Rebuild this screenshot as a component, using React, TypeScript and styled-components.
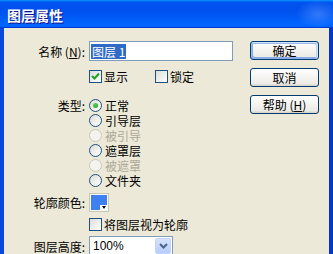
import React from "react"
import styled, { createGlobalStyle, css } from "styled-components"

const GlobalStyle = createGlobalStyle`
  html, body {
    margin: 0;
    padding: 0;
    background: #ece9d8;
  }
  body {
    font-family: "Noto Sans CJK SC", "Liberation Sans", sans-serif;
    font-size: 12px;
    color: #000;
  }
`

const Window = styled.div`
  width: 333px;
  height: 254px;
  overflow: hidden;
  display: flex;
  flex-direction: column;
`

const TitleBar = styled.div`
  flex: none;
  height: 28px;
  box-sizing: border-box;
  display: flex;
  align-items: center;
  padding: 1px 0 0 7px;
  color: #fff;
  font-size: 14px;
  font-weight: bold;
  text-shadow: 1px 1px #0f1089;
  background:
    radial-gradient(ellipse 22px 14px at 318px 14px, rgba(90, 150, 255, 0.55), rgba(90, 150, 255, 0) 100%),
    linear-gradient(
      180deg,
      #0997ff,
      #0053ee 8%,
      #0050ee 40%,
      #06f 88%,
      #06f 93%,
      #005bff 95%,
      #003dd7 96%,
      #003dd7
    );
`

const Frame = styled.div`
  flex: 1;
  display: flex;
  background: #ece9d8;
  border-left: 4px solid #0a48dc;
  border-right: 4px solid #0636c6;
`

const Form = styled.div`
  width: 246px;
  flex: none;
  display: flex;
  flex-direction: column;
`

const Row = styled.div<{ $top: number; $start?: boolean }>`
  display: grid;
  grid-template-columns: 81px auto;
  column-gap: 4px;
  align-items: ${(p) => (p.$start ? "start" : "center")};
  margin-top: ${(p) => p.$top}px;
`

const Label = styled.div<{ $lh?: number }>`
  text-align: right;
  white-space: nowrap;
  ${(p) =>
    p.$lh &&
    css`
      line-height: ${p.$lh}px;
    `}
`

const Key = styled.span`
  text-decoration: underline;
`

const TextBox = styled.div`
  width: 144px;
  height: 20px;
  box-sizing: border-box;
  border: 1px solid #7f9db9;
  background: #fff;
  display: flex;
  align-items: center;
  padding-left: 1px;
`

const Selected = styled.span`
  background: #316ac5;
  color: #fff;
  line-height: 15px;
  padding: 0 1px;
`

const Checks = styled.div`
  display: grid;
  grid-template-columns: 66px auto;
`

const CheckItem = styled.label<{ $disabled?: boolean }>`
  display: flex;
  align-items: center;
  gap: 2px;
  height: 15px;
  line-height: 15px;
  white-space: nowrap;
  color: ${(p) => (p.$disabled ? "#aca899" : "#000")};
`

const Box = styled.span`
  width: 13px;
  height: 13px;
  box-sizing: border-box;
  border: 1px solid #1c5180;
  background: linear-gradient(135deg, #dcdcd7, #fff);
  display: flex;
  align-items: center;
  justify-content: center;
  flex: none;
`

const Radios = styled.div`
  display: flex;
  flex-direction: column;
`

const Circle = styled.span<{ $disabled?: boolean }>`
  width: 13px;
  height: 13px;
  box-sizing: border-box;
  border-radius: 50%;
  border: 1px solid ${(p) => (p.$disabled ? "#cac8bb" : "#1c5180")};
  background: ${(p) =>
    p.$disabled ? "#f4f3ee" : "linear-gradient(135deg, #dcdcd7, #fff)"};
  display: flex;
  align-items: center;
  justify-content: center;
  flex: none;
  margin-right: 1px;
`

const Dot = styled.span`
  width: 5px;
  height: 5px;
  border-radius: 50%;
  background: radial-gradient(circle at 35% 35%, #55d551, #219a1c);
`

const Swatch = styled.div`
  position: relative;
  width: 20px;
  height: 19px;
  box-sizing: border-box;
  border: 1px solid #f4f3ee;
  outline: 1px solid #c9c6b8;
  outline-offset: -1px;
  background: #3d80f2;
  box-shadow: inset 0 0 0 1px #f8f8f6;
`

const SwatchArrow = styled.span`
  position: absolute;
  right: 1px;
  bottom: 1px;
  width: 7px;
  height: 5px;
  background: #fff;
  display: flex;
  align-items: center;
  justify-content: center;
  &::after {
    content: "";
    border-left: 2.5px solid transparent;
    border-right: 2.5px solid transparent;
    border-top: 3px solid #000;
  }
`

const Select = styled.div`
  width: 84px;
  height: 20px;
  box-sizing: border-box;
  border: 1px solid #7f9db9;
  background: #fff;
  display: flex;
  align-items: center;
  justify-content: space-between;
  padding: 1px;
`

const SelectText = styled.span`
  padding-left: 2px;
  font-family: "Liberation Sans", sans-serif;
`

const DropButton = styled.span`
  width: 16px;
  height: 16px;
  border-radius: 2px;
  background: linear-gradient(180deg, #d6e2fd, #b8cdfb);
  border: 1px solid #c3d3fd;
  box-sizing: border-box;
  display: flex;
  align-items: center;
  justify-content: center;
`

const Buttons = styled.div`
  display: flex;
  flex-direction: column;
  gap: 8px;
  padding-top: 13px;
`

const Button = styled.button<{ $default?: boolean }>`
  width: 69px;
  height: 19px;
  padding: 0;
  box-sizing: border-box;
  font: inherit;
  color: #000;
  border: 1px solid #003c74;
  border-radius: 3px;
  background: linear-gradient(180deg, #fff, #ecebe6 86%, #d6d0c5);
  display: flex;
  align-items: center;
  justify-content: center;
  line-height: 1;
  white-space: pre;
  ${(p) =>
    p.$default &&
    css`
      box-shadow: inset -1px 1px #cee7ff, inset 1px 2px #98b8ea,
        inset -2px 2px #bcd4f6, inset 1px -1px #89ade4, inset 2px -2px #89ade4;
    `}
`

const Check = () => (
  <svg width="9" height="9" viewBox="0 0 9 9">
    <path d="M1 4 L3.5 6.5 L8 1.5" fill="none" stroke="#21a121" strokeWidth="2" />
  </svg>
)

const Chevron = () => (
  <svg width="9" height="6" viewBox="0 0 9 6">
    <path d="M1 1 L4.5 4.5 L8 1" fill="none" stroke="#4d6185" strokeWidth="2" />
  </svg>
)

const radioItems = [
  { text: "正常", checked: true },
  { text: "引导层" },
  { text: "被引导", disabled: true },
  { text: "遮罩层" },
  { text: "被遮罩", disabled: true },
  { text: "文件夹" },
]

const App: React.FC = () => {
  return (
    <Window>
      <GlobalStyle />
      <TitleBar>图层属性</TitleBar>
      <Frame>
        <Form>
          <Row $top={13}>
            <Label>
              名称 (<Key>N</Key>):
            </Label>
            <TextBox>
              <Selected>图层 1</Selected>
            </TextBox>
          </Row>
          <Row $top={8}>
            <span />
            <Checks>
              <CheckItem>
                <Box>
                  <Check />
                </Box>
                显示
              </CheckItem>
              <CheckItem>
                <Box />
                锁定
              </CheckItem>
            </Checks>
          </Row>
          <Row $top={14} $start>
            <Label $lh={15}>类型:</Label>
            <Radios>
              {radioItems.map((r) => (
                <CheckItem key={r.text} $disabled={r.disabled}>
                  <Circle $disabled={r.disabled}>{r.checked && <Dot />}</Circle>
                  {r.text}
                </CheckItem>
              ))}
            </Radios>
          </Row>
          <Row $top={5}>
            <Label>轮廓颜色:</Label>
            <Swatch>
              <SwatchArrow />
            </Swatch>
          </Row>
          <Row $top={5}>
            <span />
            <CheckItem>
              <Box />
              将图层视为轮廓
            </CheckItem>
          </Row>
          <Row $top={4}>
            <Label>图层高度:</Label>
            <Select>
              <SelectText>100%</SelectText>
              <DropButton>
                <Chevron />
              </DropButton>
            </Select>
          </Row>
        </Form>
        <Buttons>
          <Button $default>确定</Button>
          <Button>取消</Button>
          <Button>
            帮助 (<Key>H</Key>)
          </Button>
        </Buttons>
      </Frame>
    </Window>
  )
}

export default App
